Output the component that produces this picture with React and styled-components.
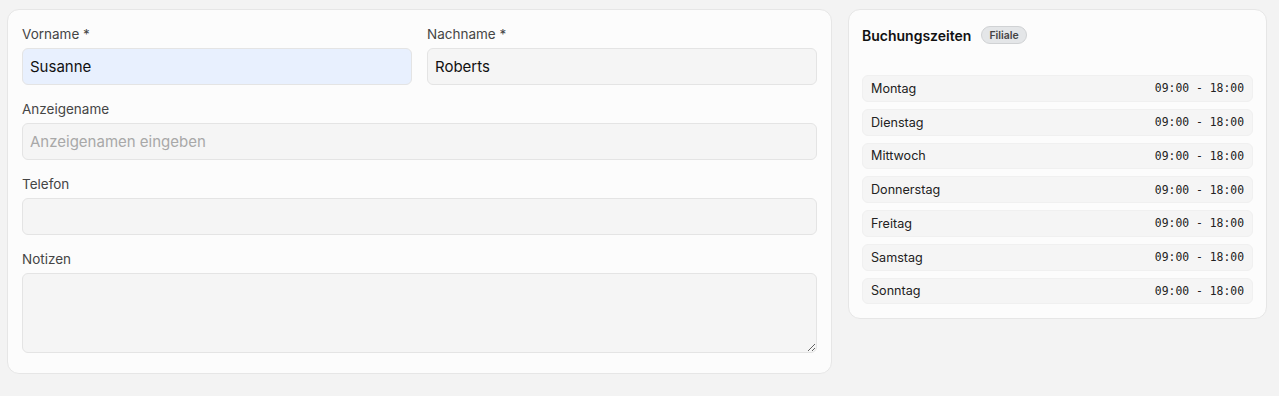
import React from "react";
import styled, { createGlobalStyle } from "styled-components";

const Global = createGlobalStyle`
  * { box-sizing: border-box; }
  html, body { margin: 0; padding: 0; background: #f3f3f3; }
  body { font-family: Inter, "Noto Sans", sans-serif; color: #1f1f1f; }
`;

const Page = styled.div`
  display: flex;
  align-items: flex-start;
  gap: 16px;
  padding: 9px 12px 0 7px;
`;

const Card = styled.section`
  background: #fcfcfc;
  border: 1px solid #e6e6e6;
  border-radius: 12px;
`;

const FormCard = styled(Card)`
  width: 825px;
  flex: none;
  padding: 14px 14px 6px;
`;

const HoursCard = styled(Card)`
  flex: 1;
  padding: 14px 13px 14px;
`;

const Row2 = styled.div`
  display: grid;
  grid-template-columns: 1fr 1fr;
  gap: 15px;
`;

const Field = styled.div`
  display: flex;
  flex-direction: column;
  gap: 4px;
  margin-bottom: 14px;
`;

const Label = styled.label`
  font-size: 13.5px;
  line-height: 20px;
  color: #454545;
`;

const inputBase = `
  width: 100%;
  border: 1px solid #e4e4e4;
  border-radius: 6px;
  font-family: Inter, "Noto Sans", sans-serif;
  font-size: 15px;
  color: #111;
  padding: 0 7px;
  outline: none;
  &::placeholder { color: #a8a8a8; }
`;

const Input = styled.input`
  ${inputBase}
  height: 37px;
  background: ${(p) => (p.$filled ? "#e8f0fe" : "#f5f5f5")};
`;

const TextArea = styled.textarea`
  ${inputBase}
  height: 80px;
  padding: 8px 7px;
  background: #f5f5f5;
  resize: vertical;
  display: block;
`;

const Header = styled.div`
  display: flex;
  align-items: center;
  gap: 10px;
  height: 22px;
  margin-bottom: 29px;
`;

const Title = styled.h2`
  margin: 0;
  font-size: 14px;
  font-weight: 600;
  color: #111;
`;

const Badge = styled.span`
  display: inline-flex;
  align-items: center;
  height: 18px;
  padding: 0 7px;
  border-radius: 999px;
  background: #e4e6e8;
  border: 1px solid #d0d2d4;
  font-size: 10.5px;
  font-weight: 600;
  color: #444;
`;

const List = styled.div`
  display: flex;
  flex-direction: column;
  gap: 7px;
`;

const DayRow = styled.div`
  display: flex;
  justify-content: space-between;
  align-items: center;
  height: 26.75px;
  padding: 0 8px;
  background: #f5f5f5;
  border: 1px solid #f0f0f0;
  border-radius: 6px;
`;

const Day = styled.span`
  font-size: 12.6px;
  color: #222;
`;

const Time = styled.span`
  font-family: "DejaVu Sans Mono", monospace;
  font-size: 11.4px;
  font-weight: 500;
  color: #222;
`;

const days = ["Montag", "Dienstag", "Mittwoch", "Donnerstag", "Freitag", "Samstag", "Sonntag"];

export default function App() {
  return (
    <>
      <Global />
      <Page>
        <FormCard>
          <Row2>
            <Field>
              <Label>Vorname *</Label>
              <Input $filled defaultValue="Susanne" />
            </Field>
            <Field>
              <Label>Nachname *</Label>
              <Input defaultValue="Roberts" />
            </Field>
          </Row2>
          <Field>
            <Label>Anzeigename</Label>
            <Input placeholder="Anzeigenamen eingeben" />
          </Field>
          <Field>
            <Label>Telefon</Label>
            <Input />
          </Field>
          <Field>
            <Label>Notizen</Label>
            <TextArea />
          </Field>
        </FormCard>
        <HoursCard>
          <Header>
            <Title>Buchungszeiten</Title>
            <Badge>Filiale</Badge>
          </Header>
          <List>
            {days.map((d) => (
              <DayRow key={d}>
                <Day>{d}</Day>
                <Time>09:00 - 18:00</Time>
              </DayRow>
            ))}
          </List>
        </HoursCard>
      </Page>
    </>
  );
}
